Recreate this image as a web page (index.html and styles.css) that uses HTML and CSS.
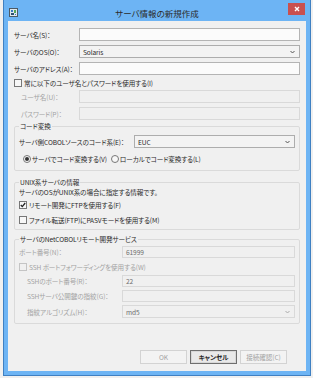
FILE: index.html
```html
<!DOCTYPE html>
<html lang="ja">
<head>
  <meta charset="UTF-8">
  <title>サーバ情報の新規作成</title>
  <link rel="stylesheet" href="styles.css">
</head>
<body>

<div class="window">
  <div class="titlebar">
    <svg class="app-icon" width="9" height="9" viewBox="0 0 9 9">
      <rect x="0.5" y="0.5" width="8" height="8" fill="#dfe8ee" stroke="#4b5a66"/>
      <rect x="2" y="2" width="2" height="2" fill="#3a78c2"/>
      <rect x="5" y="2" width="2" height="3" fill="#58a65a"/>
      <rect x="2" y="5" width="3" height="2" fill="#2d4f6e"/>
      <rect x="6" y="6" width="1" height="1" fill="#3a78c2"/>
    </svg>
    <span class="title">サーバ情報の新規作成</span>
    <span class="close">
      <svg width="6" height="6" viewBox="0 0 6 6"><path d="M1 1 L5 5 M5 1 L1 5" stroke="#fff" stroke-width="1.4"/></svg>
    </span>
  </div>

  <div class="client">
    <div class="row">
      <span class="lbl">サーバ名(S)：</span>
      <span class="field"></span>
    </div>
    <div class="row">
      <span class="lbl">サーバのOS(O)：</span>
      <span class="field combo">Solaris<svg class="arrow" width="5" height="4" viewBox="0 0 5 4"><path d="M0.5 1 L2.5 3 L4.5 1" fill="none" stroke="#555" stroke-width="1"/></svg></span>
    </div>
    <div class="row">
      <span class="lbl">サーバのアドレス(A)：</span>
      <span class="field"></span>
    </div>
    <div class="check-row first-check">
      <span class="box"></span>常に以下のユーザ名とパスワードを使用する(I)
    </div>
    <div class="row disabled after-check">
      <span class="lbl indent">ユーザ名(U)：</span>
      <span class="field"></span>
    </div>
    <div class="row disabled">
      <span class="lbl indent">パスワード(P)：</span>
      <span class="field"></span>
    </div>

    <fieldset class="group code-group">
      <legend>コード変換</legend>
      <div class="row code-row">
        <span class="lbl wide">サーバ側COBOLソースのコード系(E)：</span>
        <span class="field combo">EUC<svg class="arrow" width="5" height="4" viewBox="0 0 5 4"><path d="M0.5 1 L2.5 3 L4.5 1" fill="none" stroke="#555" stroke-width="1"/></svg></span>
      </div>
      <div class="radio-row">
        <span class="radio checked"></span><span class="radio-text">サーバでコード変換する(V)</span>
        <span class="radio"></span><span class="radio-text">ローカルでコード変換する(L)</span>
      </div>
    </fieldset>

    <fieldset class="group unix-group">
      <legend>UNIX系サーバの情報</legend>
      <div class="info">サーバのOSがUNIX系の場合に指定する情報です。</div>
      <div class="check-row ftp-check">
        <span class="box checked">
          <svg width="6" height="6" viewBox="0 0 6 6"><path d="M0.8 3 L2.3 4.6 L5.2 1" fill="none" stroke="#222" stroke-width="1.3"/></svg>
        </span>リモート開発にFTPを使用する(F)
      </div>
      <div class="check-row pasv-check">
        <span class="box"></span>ファイル転送(FTP)にPASVモードを使用する(M)
      </div>
    </fieldset>

    <fieldset class="group net-group">
      <legend>サーバのNetCOBOLリモート開発サービス</legend>
      <div class="row small disabled port-row">
        <span class="lbl port">ポート番号(N)：</span>
        <span class="field value">61999</span>
      </div>
      <div class="check-row disabled ssh-check">
        <span class="box"></span>SSH ポートフォワーディングを使用する(W)
      </div>
      <div class="row small disabled ssh-port">
        <span class="lbl port indent2">SSHのポート番号(R)：</span>
        <span class="field value">22</span>
      </div>
      <div class="row small disabled key-row">
        <span class="lbl port indent2">SSHサーバ公開鍵の指紋(G)：</span>
        <span class="field"></span>
      </div>
      <div class="row disabled algo-row">
        <span class="lbl port indent2">指紋アルゴリズム(H)：</span>
        <span class="field combo value">md5<svg class="arrow" width="5" height="4" viewBox="0 0 5 4"><path d="M0.5 1 L2.5 3 L4.5 1" fill="none" stroke="#aaa" stroke-width="1"/></svg></span>
      </div>
    </fieldset>

    <div class="buttons">
      <span class="btn off">OK</span>
      <span class="btn default">キャンセル</span>
      <span class="btn off">接続確認(C)</span>
    </div>
  </div>
</div>

</body>
</html>
```

FILE: styles.css
```css
* {
  box-sizing: border-box;
}

body {
  margin: 0;
  background-color: #f0f0f0;
  font-family: "Noto Sans CJK JP", "Noto Sans", sans-serif;
  font-size: 6.6px;
  letter-spacing: -0.1px;
  font-feature-settings: "palt";
  color: #2a2a2a;
}

/* Fensterrahmen */
.window {
  margin-left: 3px;
  width: 308px;
  height: 376px;
  background-color: #6db4f4;
  border: 1px solid #3f80c2;
  border-top: none;
  padding: 0 4px 4px;
  display: flex;
  flex-direction: column;
}

.titlebar {
  height: 21px;
  display: grid;
  grid-template-columns: 1fr auto 1fr;
  align-items: start;
}

.app-icon {
  margin: 8px 0 0 1px;
}

.title {
  margin-top: 7px;
  font-size: 8.5px;
  letter-spacing: 0;
  line-height: 12px;
  color: #2b2b2b;
}

.close {
  justify-self: end;
  margin: 3px 1px 0 0;
  width: 17px;
  height: 12px;
  background-color: #c9504f;
  display: flex;
  align-items: center;
  justify-content: center;
}

.client {
  flex: 1;
  background-color: #f0f0f0;
  padding: 7px 6px 7px;
  display: flex;
  flex-direction: column;
}

/* Zeilen */
.row {
  display: flex;
  align-items: center;
  height: 13px;
  margin-top: 4px;
}

.client > .row:first-child {
  margin-top: 0;
}

.lbl {
  width: 65px;
  flex-shrink: 0;
  white-space: nowrap;
}

.lbl.indent {
  padding-left: 7px;
}

.lbl.wide {
  width: 115px;
}

.lbl.port {
  width: 103px;
}

.lbl.indent2 {
  padding-left: 8px;
}

.field {
  flex: 1;
  height: 100%;
  background-color: #fbfbfb;
  border: 1px solid #b4b4b4;
  display: flex;
  align-items: center;
  padding-left: 3px;
  line-height: 10px;
}

.field.combo {
  background-color: #f3f3f3;
  border-color: #adadad;
  justify-content: space-between;
  padding-right: 4px;
}

.disabled {
  color: #a3a3a3;
}

.disabled .field {
  background-color: #f0f0f0;
  border-color: #d9d9d9;
}

.disabled .field.value {
  color: #6d6d6d;
}

/* Checkboxen und Radios */
.check-row {
  display: flex;
  align-items: center;
  height: 13px;
  white-space: nowrap;
}

.first-check {
  margin-top: 1px;
}

.after-check {
  margin-top: 1px;
}

.box {
  width: 8px;
  height: 8px;
  border: 1px solid #777;
  background-color: #f7f7f7;
  margin-right: 2px;
  display: flex;
  align-items: center;
  justify-content: center;
}

.disabled .box {
  border-color: #c4c4c4;
  background-color: #f0f0f0;
}

.radio-row {
  display: flex;
  align-items: center;
  height: 12px;
  margin-top: 5px;
  padding-left: 4px;
  white-space: nowrap;
}

.radio {
  width: 8px;
  height: 8px;
  border: 1px solid #777;
  border-radius: 50%;
  background-color: #f7f7f7;
  margin-right: 1px;
  display: flex;
  align-items: center;
  justify-content: center;
}

.radio.checked::after {
  content: "";
  width: 4px;
  height: 4px;
  border-radius: 50%;
  background-color: #333;
}

.radio-text {
  margin-right: 4px;
}

/* Gruppen */
.group {
  margin: 0;
  border: 1px solid #dadada;
  border-radius: 2px;
  padding: 0 4px;
  min-width: 0;
}

.group legend {
  padding: 0 1px;
  line-height: 10px;
  color: #2b2b2b;
}

.code-group {
  margin-top: 1px;
  padding-bottom: 5px;
}

.code-row {
  margin-top: 4px;
}

.unix-group {
  margin-top: 6px;
  padding-bottom: 3px;
}

.info {
  line-height: 10px;
  height: 10px;
}

.ftp-check {
  margin-top: 1px;
}

.pasv-check {
  margin-top: 2px;
}

.net-group {
  margin-top: 4px;
  padding-bottom: 5px;
}

.row.small {
  height: 12px;
}

.port-row {
  margin-top: 2px;
}

.ssh-check {
  margin-top: 2px;
}

.ssh-port {
  margin-top: 2px;
}

.key-row {
  margin-top: 3px;
}

.algo-row {
  margin-top: 3px;
}

/* Knöpfe */
.buttons {
  margin-top: auto;
  display: flex;
  justify-content: flex-end;
  gap: 3px;
  padding-right: 13px;
}

.btn {
  width: 47px;
  height: 14px;
  display: flex;
  align-items: center;
  justify-content: center;
  border: 1px solid #acacac;
  background-color: #e9e9e9;
}

.btn.off {
  color: #a3a3a3;
  border-color: #d3d3d3;
  background-color: #f3f3f3;
}

.btn.default {
  border-color: #6f6f6f;
  box-shadow: inset 0 0 0 1px #d8d8d8;
  font-weight: bold;
}
```
